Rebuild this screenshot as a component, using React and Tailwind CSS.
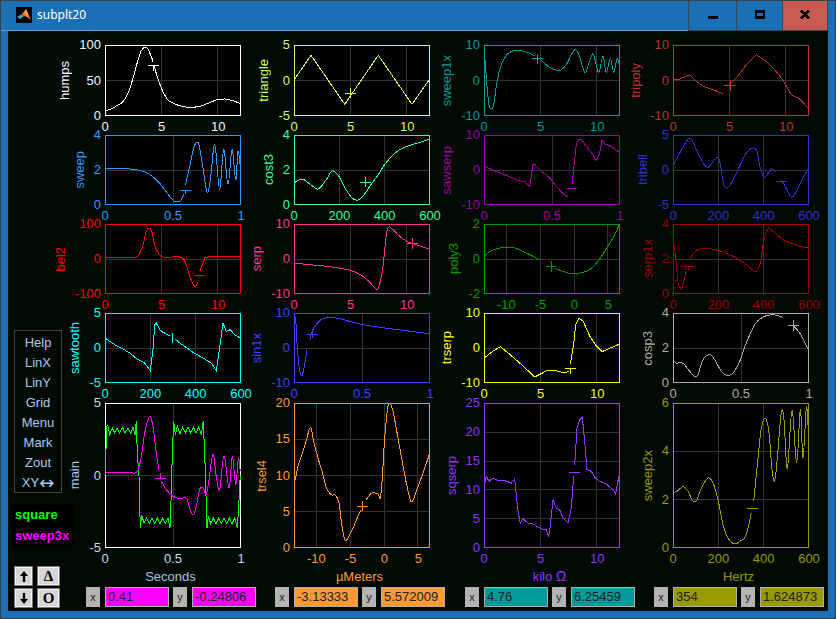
import React from 'react';

// x tick sets: [label, fraction of axis]
const T12 = [['0', 0], ['5', 0.4167], ['10', 0.8333]];
const T600 = [['0', 0], ['200', 0.3333], ['400', 0.6667], ['600', 1]];
const T1 = [['0', 0], ['0.5', 0.5], ['1', 1]];
const TNEG = [['-10', 0.165], ['-5', 0.416], ['0', 0.665], ['5', 0.914]];

// curves are traced at 3x, o is the box corner in trace coords, "/" breaks the line
const PLOTS = [
  {
    name: 'humps', at: 'col-start-1 row-start-1', c: '#ffffff', tc: 'text-[#f4f8ff]', y: ['100', '50', '0'], x: T12, h: 71, o: [316, 135],
    p: '316,332 335,327 350,318 370,305 385,280 400,235 415,180 425,152 435,142 445,148 455,170 460,185/462,198 465,205 478,245 490,275 505,300 525,312 545,318 570,322 600,319 625,310 650,300 675,297 700,302 722,311',
    m: ['444,197 477,197', '460,197 460,212'],
  },
  {
    name: 'triangle', at: 'col-start-2 row-start-1', c: '#ccff66', tc: 'text-[#ccff66]', y: ['5', '0', '-5'], x: T12, h: 71, o: [0, 0], sharp: true,
    p: '0,105 51,31 152,178 253,31 354,178 405,105',
    m: ['153,144 186,144', '170,128 170,160'],
  },
  {
    name: 'sweep1x', at: 'col-start-3 row-start-1', c: '#009999', tc: 'text-[#009999]', y: ['10', '0', '-10'], x: T12, h: 71, o: [133, 46],
    p: '133,60 137,100 142,170 148,225 155,238 162,225 170,170 180,120 195,85 210,68 235,62 260,67 285,78/305,92 325,110 345,120 362,122 380,105 395,75 407,60 418,75 430,115 438,128 448,100 460,72 470,105 478,128 490,80 500,128 512,85 522,128 532,88 539,105',
    m: ['277,87 310,87', '293,72 293,102'],
  },
  {
    name: 'tripoly', at: 'col-start-4 row-start-1', c: '#bb3333', tc: 'text-[#bb3333]', y: ['10', '0', '-10'], x: T12, h: 71, o: [40, 136], sharp: true,
    p: '40,241 60,238 90,226 110,245 135,262 165,272 190,282/205,260 230,235 260,195 290,165 320,185 345,210 370,242 395,285 420,298 445,325',
    m: ['193,257 228,257', '211,240 211,273'],
  },
  {
    name: 'sweep', at: 'col-start-1 row-start-2', c: '#3399ff', tc: 'text-[#3399ff]', y: ['4', '2', '0'], x: T1, h: 70, o: [316, 406],
    p: '316,508 390,508 410,510 435,517 455,528 475,545 495,570 510,590 522,603 535,606 545,600 553,582/558,555 570,500 582,445 590,430 598,435 610,505 622,578 632,540 642,445 648,450 660,570 672,450 685,555 697,450 708,540 715,455 722,500',
    m: ['540,571 573,571', '556,571 556,583'],
  },
  {
    name: 'cost3', at: 'col-start-2 row-start-2', c: '#33ff99', tc: 'text-[#33ff99]', y: ['4', '2', '0'], x: T600, h: 70, o: [0, 0],
    p: '0,144 24,132 48,147 72,162 96,135 114,108 132,120 153,159 174,189 192,195 210,180 228,153 252,120 273,87 303,54 333,36 372,24 408,12',
    m: ['198,141 231,141', '214,125 214,157'],
  },
  {
    name: 'sawserp', at: 'col-start-3 row-start-2', c: '#a000a0', tc: 'text-[#a000a0]', y: ['10', '0', '-10'], x: T1, h: 70, o: [133, 316], sharp: true,
    p: '133,408 145,415 170,425 200,437 235,452 255,457 270,472 280,402 286,405 305,425 330,445 350,470 370,492 385,502/392,490/397,465 410,345 418,328 425,328 440,350 460,375 470,393 480,370 487,331 497,345 510,347 525,358 539,368',
    m: ['378,476 411,476'],
  },
  {
    name: 'tribell', at: 'col-start-4 row-start-2', c: '#3333cc', tc: 'text-[#3333cc]', y: ['5', '0', '-5'], x: T600, h: 70, o: [130, 31],
    p: '130,125 150,85 180,40 200,75 220,115 235,128 250,110 262,98 270,110 280,170 290,190 305,175 325,135 350,85 370,70 382,80 392,130 405,158 425,133 440,142/455,165 470,190 485,218 500,200 520,160 536,132',
    m: ['438,170 471,170'],
  },
  {
    name: 'bel2', at: 'col-start-1 row-start-3', c: '#ff0000', tc: 'text-[#ff0000]', y: ['100', '0', '-100'], x: T12, h: 70, o: [136, 43],
    p: '136,143 225,143 240,130 250,105 260,65 268,55 276,65 285,105 295,128 310,142 365,143 380,165 390,200 405,230 415,218/420,185 435,150 445,142 541,142',
    m: ['402,196 435,196'],
  },
  {
    name: 'serp', at: 'col-start-2 row-start-3', c: '#ff3399', tc: 'text-[#ff3399]', y: ['10', '0', '-10'], x: T12, h: 70, o: [103, 43],
    p: '103,160 150,165 200,170 250,177 280,185 310,200 330,218 350,238 358,230 370,170 380,75 388,52 400,60 420,80 445,97 470,105 509,118',
    m: ['442,102 475,102', '458,85 458,118'],
  },
  {
    name: 'poly3', at: 'col-start-3 row-start-3', c: '#009900', tc: 'text-[#009900]', y: ['2', '0', '-2'], x: TNEG, h: 70, o: [133, 28],
    p: '133,125 155,108 180,100 200,97 225,100 260,115 300,135/345,160 385,175 420,175 450,165 475,140 505,95 525,60 539,30',
    m: ['318,155 350,155', '334,140 334,172'],
  },
  {
    name: 'serp1x', at: 'col-start-4 row-start-3', c: '#990000', tc: 'text-[#990000]', y: ['4', '2', '0'], x: T600, h: 70, o: [130, 298],
    p: '130,380 133,362 138,400 145,470 153,491 160,480 170,430/180,405 195,382 215,372 240,372 280,382 320,400 350,420 375,440 385,435 395,400 402,350 415,313 430,320 460,345 500,362 536,370',
    m: ['159,425 192,425', '176,425 176,440'],
  },
  {
    name: 'sawtooth', at: 'col-start-1 row-start-4', c: '#00ffff', tc: 'text-[#00ffff]', y: ['5', '0', '-5'], x: T600, h: 70, o: [136, 310], sharp: true,
    p: '136,385 150,395 165,405 185,415 210,430 235,450 255,460 272,483 280,420 285,345 290,340 300,360 310,368 330,378/345,388 365,403 400,428 430,445 455,460 470,483 482,400 490,340 500,365 512,360 525,375 541,385',
    m: ['338,370 338,400'],
  },
  {
    name: 'sin1x', at: 'col-start-2 row-start-4', c: '#4040ff', tc: 'text-[#4040ff]', y: ['10', '0', '-10'], x: T1, h: 70, o: [103, 310],
    p: '103,325 108,330 112,400 118,470 125,498 132,480 142,420/150,390 160,360 178,335 195,325 230,325 270,335 320,347 400,358 509,372',
    m: ['142,373 174,373', '158,358 158,385'],
  },
  {
    name: 'trserp', at: 'col-start-3 row-start-4', c: '#ffff00', tc: 'text-[#ffff00]', y: ['10', '0', '-10'], x: T12, h: 70, o: [133, 296], sharp: true,
    p: '133,432 160,410 182,397 210,420 250,455 285,488 320,470 345,468 370,475 388,472/392,450 402,390 408,330 418,312 430,320 450,365 470,395 487,412 510,402 539,390',
    m: ['376,461 408,461', '391,461 391,478'],
  },
  {
    name: 'cosp3', at: 'col-start-4 row-start-4', c: '#aaaaaa', tc: 'text-[#aaaaaa]', y: ['4', '2', '0'], x: T1, h: 70, o: [130, 565],
    p: '130,707 140,715 160,716 180,740 195,755 205,750 220,705 240,690 255,705 275,740 292,752 310,745 330,710 350,655 375,600 400,577 430,570 460,578/490,603 510,625 536,675',
    m: ['475,603 508,603', '491,587 491,620'],
  },
  {
    name: 'main', nc: 'text-[#a4c8e8]', at: 'col-start-1 row-start-5', c: '#ffffff', tc: 'text-[#c4dcf4]', y: ['5', '0', '-5'], x: T1, h: 145, o: [316, 250], unit: 'Seconds', uc: 'text-[#a4c4e4]', sharp: true,
    p: '318,465 320,320 325,318 330,345 338,325 345,340 352,325 360,340 368,322 376,340 385,325 393,342 400,322 406,345 410,305 413,400 418,470 422,625 426,585 433,610 441,595 449,612 457,595 465,612 473,595 481,612 489,595 497,612 505,595 511,625 515,520 518,400 522,307 527,345 533,320 541,342 549,322 557,340 565,322 573,340 581,322 589,340 597,322 605,345 611,305 616,430 622,625 626,590 633,612 641,595 649,612 657,595 665,612 673,595 681,612 689,595 697,612 705,595 713,625 717,560 722,465',
    line: '#00ff00',
    p2: '318,458 385,458 405,460 415,450 425,410 435,340 445,300 452,292 460,320 470,400 478,450/485,485 500,510 520,530 540,537 560,535 570,565 580,586 590,560 600,510 610,505 620,525 628,480 640,403 650,470 660,510 673,408 688,505 698,410 708,495 716,418 722,455',
    line2: '#ff00ff',
    m: ['466,475 498,475', '482,460 482,478'],
  },
  {
    name: 'trsel4', at: 'col-start-2 row-start-5', c: '#ff9933', tc: 'text-[#ff9933]', y: ['20', '15', '10', '5', '0'], x: TNEG, h: 145, o: [103, 25], unit: 'µMeters', uc: 'text-[#ff9933]',
    p: '103,240 106,255 115,215 130,170 142,130 148,105 155,102 162,140 175,190 190,240 200,280 215,300 228,302 238,325 245,380 255,435 265,430 280,400 295,365 305,345/320,315 335,296 355,298 362,310 368,250 375,130 385,35 392,28 400,50 415,130 435,240 450,310 458,320 470,290 490,235 509,180',
    m: ['291,334 324,334', '307,318 307,350'],
  },
  {
    name: 'sqserp', at: 'col-start-3 row-start-5', c: '#9933ff', tc: 'text-[#9933ff]', y: ['25', '20', '15', '10', '5', '0'], x: T12, h: 145, o: [103, 25], uc: 'text-[#9933ff]', sharp: true,
    unit: <>kilo <span className="text-[14px] leading-none">Ω</span></>,
    p: '105,265 110,245 118,260 130,250 145,258 165,258 185,265 195,253 205,350 212,385 220,372 235,385 250,388 265,397 280,405 290,405 297,425 302,395 310,315 320,340 330,345 340,370 355,385 365,340 372,245/375,210 382,100 390,75 398,68 405,140 412,225 425,230 435,248 450,260 470,268 490,285 498,298 507,245 509,275',
    m: ['357,232 390,232'],
  },
  {
    name: 'sweep2x', at: 'col-start-4 row-start-5', c: '#999900', tc: 'text-[#999900]', y: ['6', '4', '2', '0'], x: T600, h: 145, o: [100, 25], unit: 'Hertz', uc: 'text-[#999900]',
    p: '100,293 112,290 130,276 145,290 160,320 172,315 185,280 205,250 220,265 235,315 250,390 265,430 285,448 300,440 318,425 335,355/342,320 355,190 365,100 377,70 388,115 397,225 405,258 413,190 425,55 433,75 443,222 457,48 471,205 482,45 490,190 500,40 505,90',
    m: ['322,340 354,340'],
  },
];

const READOUTS = [
  { x: '0.41', y: '-0.24806', bg: 'bg-[#ff00ff]' },
  { x: '-3.13333', y: '5.572009', bg: 'bg-[#ff9933]' },
  { x: '4.76', y: '6.25459', bg: 'bg-[#009999]' },
  { x: '354', y: '1.624873', bg: 'bg-[#999900]' },
];

const MENU = ['Help', 'LinX', 'LinY', 'Grid', 'Menu', 'Mark', 'Zout'];

const parse = (seg, o) =>
  seg.split(' ').map((pt) => {
    const [a, b] = pt.split(',').map(Number);
    return [(a - o[0]) / 3, (b - o[1]) / 3];
  });

const toPath = (str, o, sharp) =>
  str
    .split('/')
    .map((seg) => {
      const pts = parse(seg, o);
      let d = `M${pts[0][0].toFixed(1)} ${pts[0][1].toFixed(1)}`;
      for (let i = 0; i < pts.length - 1; i++) {
        const p1 = pts[i];
        const p2 = pts[i + 1];
        if (sharp) {
          d += `L${p2[0].toFixed(1)} ${p2[1].toFixed(1)}`;
        } else {
          // catmull-rom, the traced points are sparse
          const p0 = pts[i - 1] || p1;
          const p3 = pts[i + 2] || p2;
          const c1 = [p1[0] + (p2[0] - p0[0]) / 6, p1[1] + (p2[1] - p0[1]) / 6];
          const c2 = [p2[0] - (p3[0] - p1[0]) / 6, p2[1] - (p3[1] - p1[1]) / 6];
          d += `C${c1[0].toFixed(1)} ${c1[1].toFixed(1)} ${c2[0].toFixed(1)} ${c2[1].toFixed(1)} ${p2[0].toFixed(1)} ${p2[1].toFixed(1)}`;
        }
      }
      return d;
    })
    .join('');

const Plot = ({ plot }) => {
  const { name, nc, at, c, tc, y, x, h, o, p, p2, line, line2, m, unit, uc, sharp } = plot;
  const gridY = y.slice(1, -1).map((_, i) => Math.round(((i + 1) * (h - 1)) / (y.length - 1)) + 0.5);
  const gridX = x.filter((t) => t[1] > 0 && t[1] < 1).map((t) => Math.round(t[1] * 135) + 0.5);
  return (
    <div className={`${at} flex justify-end items-start ${tc}`}>
      <div className="flex items-center gap-[8px] mr-[4px]">
        <span className={`[writing-mode:vertical-rl] rotate-180 leading-[13px] ${nc || ''}`}>{name}</span>
        <div className={`flex flex-col justify-between items-end -my-[7px] leading-[14px] ${h > 100 ? 'h-[159px]' : h === 71 ? 'h-[85px]' : 'h-[84px]'}`}>
          {y.map((t) => (
            <span key={t}>{t}</span>
          ))}
        </div>
      </div>
      <div className="w-[136px]">
        <svg width="136" height={h} className="block bg-black" shapeRendering="crispEdges" fill="none">
          <g stroke="#333333">
            {gridX.map((v) => (
              <path key={v} d={`M${v} 0V${h}`} />
            ))}
            {gridY.map((v) => (
              <path key={v} d={`M0 ${v}H136`} />
            ))}
          </g>
          <rect x="0.5" y="0.5" width="135" height={h - 1} stroke={c} />
          <path d={toPath(p, o, sharp)} stroke={line || c} />
          {p2 && <path d={toPath(p2, o)} stroke={line2} />}
          {m.map((seg) => (
            <path key={seg} d={toPath(seg, o, true)} stroke={line2 || c} />
          ))}
        </svg>
        <div className="relative h-[21px]">
          {x.map(([t, f]) => (
            <span key={t} className="absolute top-[3px] -translate-x-1/2 leading-[15px]" style={{ left: `${f * 100}%` }}>
              {t}
            </span>
          ))}
        </div>
        {unit && <div className={`text-center pr-[5px] leading-[15px] ${uc}`}>{unit}</div>}
      </div>
    </div>
  );
};

const ArrowBtn = ({ w, children }) => (
  <button className={`${w} h-[20px] flex items-center justify-center bg-[#d6d6d6] border-2 border-[#f4f4f4] outline outline-1 outline-[#777] -outline-offset-1 text-black font-bold text-[15px] leading-none font-['Liberation_Serif',serif]`}>
    {children}
  </button>
);

const Sidebar = () => (
  <div className="col-start-1 row-start-4 row-span-3 z-10 justify-self-start flex flex-col pt-[17px] pl-[6px] text-[13px]">
    <div className="w-[48px] h-[163px] border border-[#444] flex flex-col items-center justify-between pt-[3px] pb-[1px] text-[#a8c8f0] leading-[17px]">
      {MENU.map((t) => (
        <span key={t}>{t}</span>
      ))}
      <span className="flex items-center">
        XY<span className="font-['DejaVu_Sans',sans-serif] text-[18px] leading-[13px]">↔</span>
      </span>
    </div>
    <div className="-ml-[2px] mt-[11px] w-[61px] h-[43px] bg-black font-bold flex flex-col justify-center gap-[5px] pl-[3px] leading-[16px]">
      <span className="text-[#00ff00]">square</span>
      <span className="text-[#ff00ff]">sweep3x</span>
    </div>
    <div className="mt-[19px] grid grid-cols-[19px_23px] gap-x-[4px] gap-y-[2px]">
      <ArrowBtn w="w-[19px]">
        <svg width="8" height="11" viewBox="0 0 8 11" fill="black"><path d="M4 0 L8 5 L5.2 5 L5.2 11 L2.8 11 L2.8 5 L0 5Z" /></svg>
      </ArrowBtn>
      <ArrowBtn w="w-[23px]">Δ</ArrowBtn>
      <ArrowBtn w="w-[19px]">
        <svg width="8" height="11" viewBox="0 0 8 11" fill="black"><path d="M4 11 L8 6 L5.2 6 L5.2 0 L2.8 0 L2.8 6 L0 6Z" /></svg>
      </ArrowBtn>
      <ArrowBtn w="w-[23px]">O</ArrowBtn>
    </div>
  </div>
);

const Readout = ({ r, extra }) => (
  <div className={`flex ${extra}`}>
    <span className="w-[14px] h-[20px] bg-[#b4b4b4] text-[#222] text-[11px] flex items-center justify-center">x</span>
    <span className={`ml-[5px] w-[64px] h-[20px] ${r.bg} border border-[#b0b0b0] text-[#222] pl-[2px] leading-[18px]`}>{r.x}</span>
    <span className="ml-[4px] w-[14px] h-[20px] bg-[#b4b4b4] text-[#222] text-[11px] flex items-center justify-center">y</span>
    <span className={`ml-[5px] w-[64px] h-[20px] ${r.bg} border border-[#b0b0b0] text-[#222] pl-[2px] leading-[18px]`}>{r.y}</span>
  </div>
);

const TitleBar = () => (
  <div className="h-[31px] flex items-stretch bg-[#1a6fb5]">
    <div className="flex-1 flex items-center pl-[16px] gap-[5px] border-b border-[#5aa0d8]">
      <svg width="16" height="16" viewBox="0 0 16 16" className="bg-black">
        <path d="M1 10 L6 7 L8 9 L4 12Z" fill="#4aa0c8" />
        <path d="M6 7 L10 2 L15 13 L11 10 L8 9Z" fill="#e8782a" />
        <path d="M10 2 L12 7 L11 10 L9 5Z" fill="#f4b040" />
      </svg>
      <span className="text-white text-[12px] font-['Noto_Sans',sans-serif]">subplt20</span>
    </div>
    <div className="w-[48px] border-l border-b border-[#3c4650] flex items-center justify-center">
      <div className="w-[10px] h-[3px] bg-black mt-[5px]" />
    </div>
    <div className="w-[46px] border-l border-b border-[#3c4650] flex items-center justify-center">
      <div className="w-[10px] h-[9px] border-2 border-y-[3px] border-black -mt-[1px]" />
    </div>
    <div className="w-[46px] border-l border-r border-b border-[#3c4650] bg-[#c75c50] flex items-center justify-center">
      <svg width="10" height="9" viewBox="0 0 10 9" className="-mt-[1px]" stroke="black" strokeWidth="2.2" shapeRendering="crispEdges">
        <path d="M1 0.5 L9 8.5M9 0.5 L1 8.5" />
      </svg>
    </div>
    <div className="w-[8px]" />
  </div>
);

export default function App() {
  return (
    <div className="w-[836px] h-[619px] overflow-hidden bg-[#1a6fb5] border border-[#3a3f44] font-['Liberation_Sans',Arial,sans-serif] text-[13px]">
      <div className="-mx-px -mt-px"><TitleBar /></div>
      <div className="ml-[7px] mr-[7px] h-[580px] bg-[#000a02] pt-[14px]">
        <div className="grid grid-cols-[233px_189px_190px_189px] grid-rows-[90px_89px_89px_90px_184px_auto]">
          {PLOTS.map((plot) => (
            <Plot key={plot.name} plot={plot} />
          ))}
          <Sidebar />
          <div className="col-start-1 col-span-4 row-start-6 flex pl-[78px] gap-[19px]">
            {READOUTS.map((r, i) => (
              <Readout key={r.x} r={r} extra={i === 2 ? 'ml-px' : ''} />
            ))}
          </div>
        </div>
      </div>
    </div>
  );
}
